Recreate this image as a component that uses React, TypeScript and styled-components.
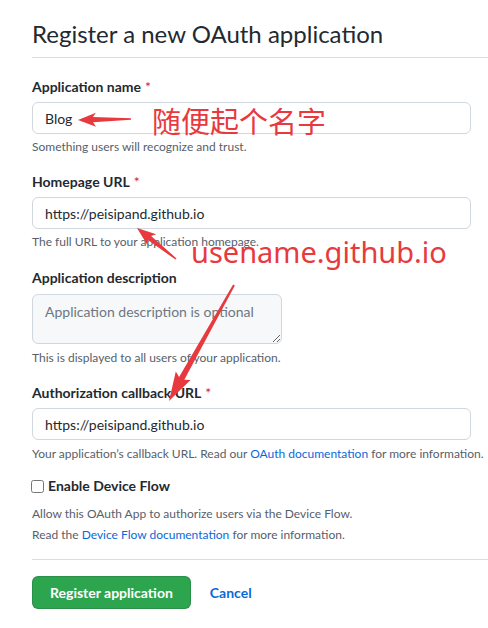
import React from "react";
import styled, { createGlobalStyle } from "styled-components";

const GlobalStyle = createGlobalStyle`
  html, body { margin: 0; padding: 0; background: #ffffff; }
  body {
    font-family: Lato, "Liberation Sans", sans-serif;
    color: #24292f;
    overflow: hidden;
  }
`;

const Page = styled.div`
  position: relative;
  width: 488px;
  height: 628px;
  box-sizing: border-box;
  padding: 19px 0 0 32px;
  overflow: hidden;
`;

const Title = styled.h1`
  margin: 0;
  font-size: 24px;
  font-weight: 400;
  line-height: 30px;
  padding-bottom: 8px;
  border-bottom: 1px solid #d8dee4;
  color: #24292f;
  white-space: nowrap;
`;

const Form = styled.form`
  display: flex;
  flex-direction: column;
  width: 439px;
  padding-top: 19px;
`;

const Field = styled.div<{ $after?: number }>`
  display: flex;
  flex-direction: column;
  margin-bottom: ${(p) => p.$after ?? 16}px;
`;

const Label = styled.label`
  font-size: 14px;
  font-weight: 700;
  line-height: 20px;
  color: #24292f;
  white-space: nowrap;
`;

const Required = styled.span`
  color: #cf222e;
  margin-left: 4px;
  font-weight: 400;
`;

const TextInput = styled.input`
  box-sizing: border-box;
  margin-top: 5px;
  width: 439px;
  height: 32px;
  padding: 5px 12px;
  font-family: inherit;
  font-size: 14px;
  color: #24292f;
  background: #ffffff;
  border: 1px solid #d0d7de;
  border-radius: 6px;
  outline: none;
`;

const TextArea = styled.textarea`
  box-sizing: border-box;
  margin-top: 6px;
  width: 250px;
  height: 50px;
  padding: 7px 12px;
  font-family: inherit;
  font-size: 14px;
  line-height: 20px;
  color: #24292f;
  background: #f6f8fa;
  border: 1px solid #d0d7de;
  border-radius: 6px;
  outline: none;
  resize: both;
  &::placeholder { color: #6e7781; }
`;

const Note = styled.p<{ $gap?: number }>`
  margin: ${(p) => p.$gap ?? 4}px 0 0;
  font-size: 12px;
  line-height: 18px;
  color: #57606a;
  white-space: nowrap;
`;

const Link = styled.a`
  color: #0969da;
  text-decoration: none;
`;

const CheckRow = styled.label`
  display: flex;
  align-items: center;
  gap: 4px;
  font-size: 14px;
  font-weight: 700;
  line-height: 20px;
  color: #24292f;
`;

const CheckBox = styled.input`
  margin: 0 0 0 -1px;
  width: 13px;
  height: 13px;
`;

const Divider = styled.hr`
  border: 0;
  border-top: 1px solid #d8dee4;
  margin: 15px 0 16px;
  width: 456px;
`;

const Actions = styled.div`
  display: flex;
  align-items: center;
  gap: 19px;
`;

const PrimaryButton = styled.button`
  box-sizing: border-box;
  height: 33px;
  padding: 0 17px;
  font-family: inherit;
  font-size: 14px;
  font-weight: 700;
  color: #ffffff;
  background: #2da44e;
  border: 1px solid rgba(27, 31, 36, 0.15);
  border-radius: 6px;
  cursor: pointer;
`;

const TextButton = styled.a`
  font-size: 14px;
  font-weight: 700;
  color: #0969da;
  text-decoration: none;
`;

const Overlay = styled.svg`
  position: absolute;
  top: 0;
  left: 0;
  pointer-events: none;
`;

const Annotation = styled.span<{ $top: number; $left: number; $size: number; $cjk?: boolean }>`
  position: absolute;
  top: ${(p) => p.$top}px;
  left: ${(p) => p.$left}px;
  font-size: ${(p) => p.$size}px;
  line-height: 1;
  color: #e8393e;
  white-space: nowrap;
  pointer-events: none;
  font-family: ${(p) =>
    p.$cjk
      ? '"Noto Sans CJK SC", sans-serif'
      : '"Noto Sans", "Noto Sans CJK SC", sans-serif'};
`;

type Pt = [number, number];

function arrowPoints(
  tip: Pt,
  tail: Pt,
  headLen: number,
  headW: number,
  neckW: number,
  tailW: number
): string {
  const dx = tip[0] - tail[0];
  const dy = tip[1] - tail[1];
  const len = Math.hypot(dx, dy);
  const d: Pt = [dx / len, dy / len];
  const n: Pt = [-d[1], d[0]];
  const b: Pt = [tip[0] - d[0] * headLen, tip[1] - d[1] * headLen];
  const back: Pt = [b[0] - d[0] * 3, b[1] - d[1] * 3];
  const pts: Pt[] = [
    tip,
    [back[0] + n[0] * headW, back[1] + n[1] * headW],
    [b[0] + n[0] * neckW, b[1] + n[1] * neckW],
    [tail[0] + n[0] * tailW, tail[1] + n[1] * tailW],
    [tail[0] - n[0] * tailW, tail[1] - n[1] * tailW],
    [b[0] - n[0] * neckW, b[1] - n[1] * neckW],
    [back[0] - n[0] * headW, back[1] - n[1] * headW],
  ];
  return pts.map((p) => `${p[0].toFixed(1)},${p[1].toFixed(1)}`).join(" ");
}

const arrows = [
  arrowPoints([78, 120], [131, 119], 15, 7, 2.6, 0.8),
  arrowPoints([137, 228], [176, 259], 16, 7, 2.6, 0.8),
  arrowPoints([169, 401], [234, 285], 26, 8.5, 3, 1),
];

export default function App() {
  return (
    <>
      <GlobalStyle />
      <Page>
        <Title>Register a new OAuth application</Title>
        <Form onSubmit={(e) => e.preventDefault()}>
          <Field>
            <Label>
              Application name<Required>*</Required>
            </Label>
            <TextInput defaultValue="Blog" />
            <Note>Something users will recognize and trust.</Note>
          </Field>
          <Field $after={17}>
            <Label>
              Homepage URL<Required>*</Required>
            </Label>
            <TextInput defaultValue="https://peisipand.github.io" />
            <Note>The full URL to your application homepage.</Note>
          </Field>
          <Field>
            <Label>Application description</Label>
            <TextArea placeholder="Application description is optional" />
            <Note $gap={5}>This is displayed to all users of your application.</Note>
          </Field>
          <Field $after={13}>
            <Label>
              Authorization callback URL<Required>*</Required>
            </Label>
            <TextInput defaultValue="https://peisipand.github.io" />
            <Note $gap={5}>
              Your application’s callback URL. Read our{" "}
              <Link href="#">OAuth documentation</Link> for more information.
            </Note>
          </Field>
          <CheckRow>
            <CheckBox type="checkbox" />
            Enable Device Flow
          </CheckRow>
          <Note $gap={9}>Allow this OAuth App to authorize users via the Device Flow.</Note>
          <Note $gap={3}>
            Read the <Link href="#">Device Flow documentation</Link> for more information.
          </Note>
          <Divider />
          <Actions>
            <PrimaryButton type="submit">Register application</PrimaryButton>
            <TextButton href="#">Cancel</TextButton>
          </Actions>
        </Form>

        <Overlay width="488" height="628" viewBox="0 0 488 628">
          {arrows.map((p, i) => (
            <polygon key={i} points={p} fill="#e8393e" />
          ))}
        </Overlay>
        <Annotation $top={106} $left={152} $size={29} $cjk>
          随便起个名字
        </Annotation>
        <Annotation $top={237} $left={191} $size={29}>
          usename.github.io
        </Annotation>
      </Page>
    </>
  );
}
